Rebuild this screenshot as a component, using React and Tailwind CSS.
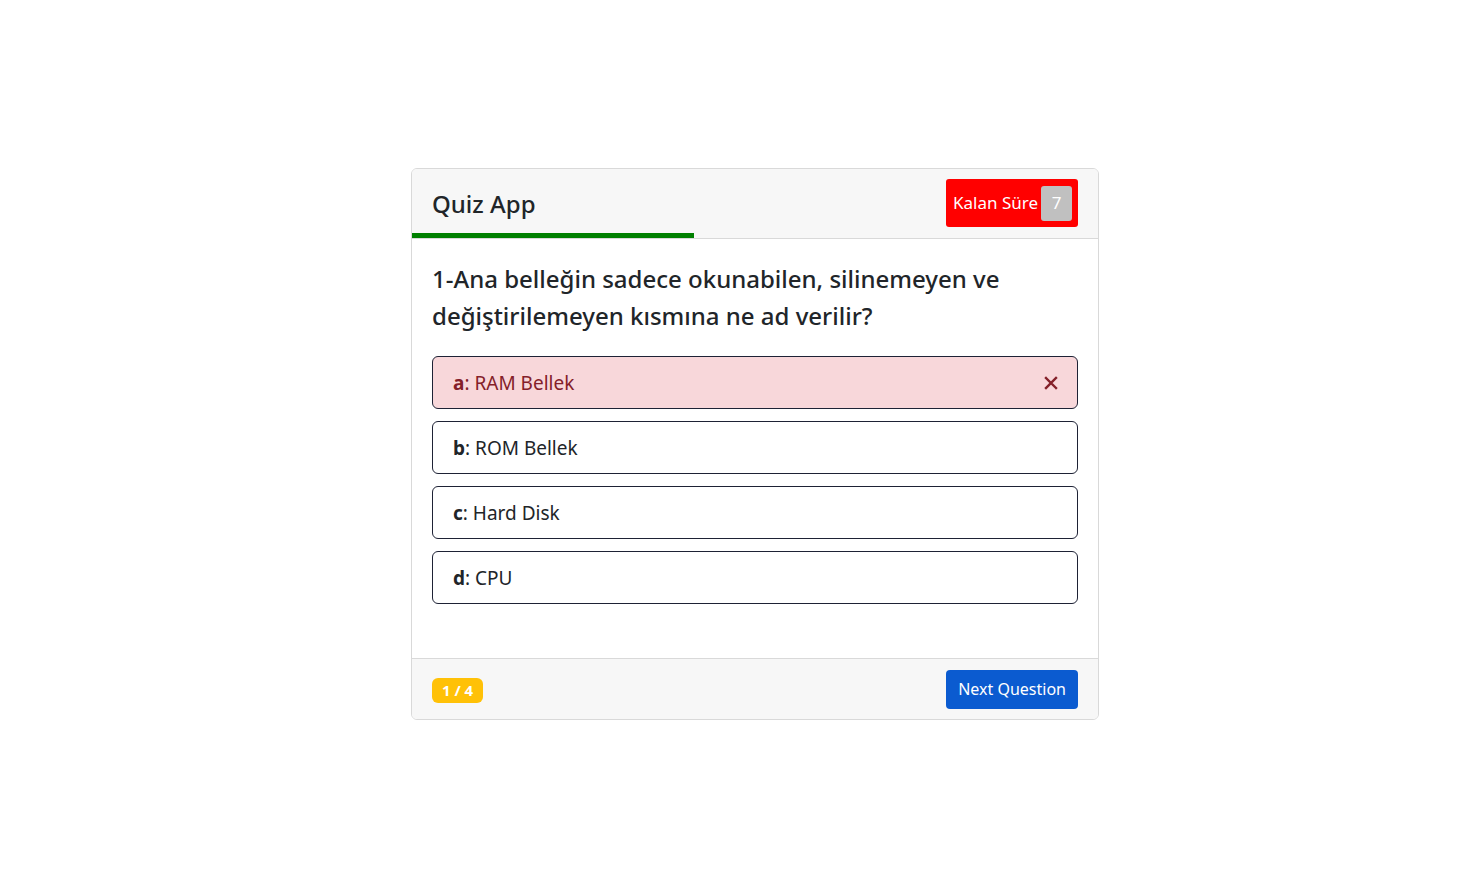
import { useState } from "react";

const options = [
  { key: "a", text: "RAM Bellek" },
  { key: "b", text: "ROM Bellek" },
  { key: "c", text: "Hard Disk" },
  { key: "d", text: "CPU" },
];

export default function App() {
  const [picked] = useState("a");

  return (
    <div className="min-h-[874px] w-full bg-white flex justify-center pt-[168px] pl-[30px] font-['Noto_Sans',sans-serif] text-[#212529]">
      <div className="w-[688px] h-[552px] flex flex-col border border-[#d9d9d9] rounded-md overflow-hidden">
        {/* Header */}
        <div className="relative h-[70px] bg-[#f7f7f7] border-b border-[#d9d9d9] flex items-start justify-between px-5 pt-[10px]">
          <h4 className="text-[24px] leading-[30px] font-medium mt-[10px]">Quiz App</h4>
          <div className="h-12 bg-[#ff0000] rounded-[3px] flex items-center pl-[7px] pr-[6px] gap-[3px] text-white text-[17px]">
            <span>Kalan Süre</span>
            <span className="w-[31px] h-[35px] bg-[#c0c0c0] rounded-[3px] flex items-center justify-center">7</span>
          </div>
          <div className="absolute left-0 bottom-0 h-[5px] w-[282px] bg-[#008000]" />
        </div>

        {/* Body */}
        <div className="flex-1 px-5 pt-5">
          <h4 className="text-[24px] leading-[37px] font-medium pr-16 mt-px">
            1-Ana belleğin sadece okunabilen, silinemeyen ve değiştirilemeyen kısmına ne ad verilir?
          </h4>
          <ul className="mt-[22px] flex flex-col gap-[12px]">
            {options.map((o) => (
              <li
                key={o.key}
                className={`h-[53px] px-5 flex items-center justify-between border border-[#1e2235] rounded-md text-[19px] pt-px ${
                  picked === o.key ? "bg-[#f8d7da] text-[#842029]" : "bg-white"
                }`}
              >
                <span>
                  <b className="font-bold">{o.key}</b>: {o.text}
                </span>
                {picked === o.key && (
                  <svg width="16" height="16" viewBox="0 0 16 16" className="mr-[-2px]">
                    <path d="M3 3L13 13M13 3L3 13" stroke="#842029" strokeWidth="2.4" strokeLinecap="square" />
                  </svg>
                )}
              </li>
            ))}
          </ul>
        </div>

        {/* Footer */}
        <div className="h-[61px] bg-[#f7f7f7] border-t border-[#d9d9d9] flex items-center justify-between px-5">
          <span className="bg-[#ffc107] text-white text-[15px] font-bold rounded-md px-[10px] h-[25px] flex items-center mt-[2px]">
            1 / 4
          </span>
          <button className="h-[39px] px-3 bg-[#0b5bd0] text-white text-[16px] rounded-[4px]">
            Next Question
          </button>
        </div>
      </div>
    </div>
  );
}
